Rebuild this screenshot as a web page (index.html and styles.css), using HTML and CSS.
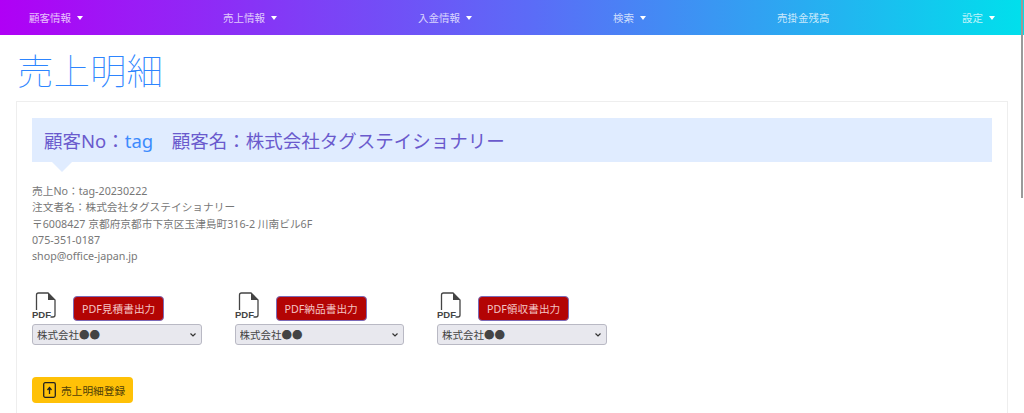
FILE: index.html
```html
<!DOCTYPE html>
<html lang="ja">
<head>
  <meta charset="UTF-8" />
  <meta name="viewport" content="width=device-width, initial-scale=1" />
  <title>売上明細</title>
  <link rel="stylesheet" href="styles.css">
</head>
<body>

<nav class="navbar">
  <a class="nav-item caret" href="#">顧客情報</a>
  <a class="nav-item caret" href="#">売上情報</a>
  <a class="nav-item caret" href="#">入金情報</a>
  <a class="nav-item caret" href="#">検索</a>
  <a class="nav-item" href="#">売掛金残高</a>
  <a class="nav-item caret" href="#">設定</a>
</nav>

<main class="page">
  <h1 class="page-title">売上明細</h1>

  <section class="card">
    <div class="balloon">
      <h2>顧客No：<a href="#">tag</a>　顧客名：株式会社タグステイショナリー</h2>
    </div>

    <p class="address">
      売上No：tag-20230222<br>
      注文者名：株式会社タグステイショナリー<br>
      〒6008427 京都府京都市下京区玉津島町316-2 川南ビル6F<br>
      075-351-0187<br>
      shop@office-japan.jp
    </p>

    <div class="pdf-row">
      <div class="pdf-col">
        <div class="pdf-head">
          <svg class="pdf-icon" width="25" height="27" viewBox="0 0 25 27" aria-hidden="true">
            <path d="M4.500 18V3a2 2 0 0 1 2-2H16l7 7v15a2 2 0 0 1-2 2h-2.500" fill="none" stroke="#444" stroke-width="1.300"/>
            <path d="M16 1l7 7h-7z" fill="#444"/>
            <text x="0" y="26" class="pdf-label">PDF</text>
          </svg>
          <button class="btn-pdf">PDF見積書出力</button>
        </div>
        <select class="company"><option>株式会社●●</option></select>
      </div>
      <div class="pdf-col">
        <div class="pdf-head">
          <svg class="pdf-icon" width="25" height="27" viewBox="0 0 25 27" aria-hidden="true">
            <path d="M4.500 18V3a2 2 0 0 1 2-2H16l7 7v15a2 2 0 0 1-2 2h-2.500" fill="none" stroke="#444" stroke-width="1.300"/>
            <path d="M16 1l7 7h-7z" fill="#444"/>
            <text x="0" y="26" class="pdf-label">PDF</text>
          </svg>
          <button class="btn-pdf">PDF納品書出力</button>
        </div>
        <select class="company"><option>株式会社●●</option></select>
      </div>
      <div class="pdf-col">
        <div class="pdf-head">
          <svg class="pdf-icon" width="25" height="27" viewBox="0 0 25 27" aria-hidden="true">
            <path d="M4.500 18V3a2 2 0 0 1 2-2H16l7 7v15a2 2 0 0 1-2 2h-2.500" fill="none" stroke="#444" stroke-width="1.300"/>
            <path d="M16 1l7 7h-7z" fill="#444"/>
            <text x="0" y="26" class="pdf-label">PDF</text>
          </svg>
          <button class="btn-pdf">PDF領収書出力</button>
        </div>
        <select class="company"><option>株式会社●●</option></select>
      </div>
    </div>

    <button class="btn-register">
      <svg width="13" height="16" viewBox="0 0 13 16" aria-hidden="true">
        <rect x="0.700" y="0.700" width="11.600" height="14.600" rx="1.500" fill="none" stroke="#222" stroke-width="1.300"/>
        <path d="M6.500 12V6.500M4.500 8L6.500 5.500 8.500 8" fill="none" stroke="#222" stroke-width="1.300"/>
      </svg>
      売上明細登録
    </button>
  </section>
</main>

<div class="scroll-thumb"></div>

</body>
</html>
```
FILE: styles.css
```css
* {
  box-sizing: border-box;
}
html, body {
  height: 100%;
  overflow: hidden;
}
body {
  margin: 0;
  font-family: "Noto Sans", "Noto Sans CJK JP", sans-serif;
  font-size: 10.700px;
  color: #777;
  background: #fff;
}
a {
  text-decoration: none;
}

/* Navbar */
.navbar {
  height: 35px;
  padding-left: 29px;
  display: grid;
  grid-template-columns: 194px 195px 195px 164px 185px 1fr;
  align-items: center;
  background: linear-gradient(90deg, #b000f5 0%, #5b6cf7 52%, #00e0ec 100%);
}
.nav-item {
  color: rgba(255, 255, 255, 0.75);
  font-size: 10.500px;
}
.caret::after {
  content: "";
  display: inline-block;
  margin-left: 6px;
  vertical-align: 2px;
  border-top: 4px solid #fff;
  border-left: 3.500px solid transparent;
  border-right: 3.500px solid transparent;
}

/* Page */
.page {
  padding: 0 16px;
}
.page-title {
  margin: 15px 0 8px 1px;
  font-size: 36.500px;
  line-height: 43px;
  font-weight: 100;
  color: #2d85ff;
}
.card {
  border: 1px solid #eee;
  padding: 16px 15px;
}
.balloon {
  position: relative;
  height: 44px;
  padding: 0 12px;
  background: #e0ecff;
  display: flex;
  align-items: center;
}
.balloon::after {
  content: "";
  position: absolute;
  left: 20px;
  bottom: -10px;
  border-top: 10px solid #e0ecff;
  border-left: 10px solid transparent;
  border-right: 10px solid transparent;
}
.balloon h2 {
  margin: 0;
  font-size: 18.500px;
  font-weight: 400;
  color: #6a5acd;
}
.balloon a {
  color: #3d8bfd;
}
.address {
  margin: 21px 0 0;
  line-height: 16.300px;
}

/* PDF buttons */
.pdf-row {
  display: flex;
  gap: 33px;
  margin-top: 28px;
}
.pdf-col {
  width: 169.500px;
}
.pdf-head {
  display: flex;
  align-items: flex-end;
  gap: 16px;
  height: 29px;
  margin-bottom: 3px;
}
.pdf-icon {
  flex: none;
  align-self: flex-start;
}
.pdf-label {
  font-family: "Liberation Sans", sans-serif;
  font-size: 9.500px;
  font-weight: bold;
  fill: #444;
}
.btn-pdf {
  height: 25px;
  padding: 0 8px;
  font-family: inherit;
  font-size: 10.700px;
  color: #f3c4c4;
  background: #b30404;
  border: 1px solid #7a6ab8;
  border-radius: 4px;
}
.company {
  display: block;
  width: 100%;
  height: 21px;
  padding: 0 4px;
  appearance: none;
  font-family: "Noto Sans CJK JP", sans-serif;
  font-size: 10.500px;
  color: #444;
  background: #e8e8ee url("data:image/svg+xml,%3Csvg xmlns='http://www.w3.org/2000/svg' width='6' height='4'%3E%3Cpath d='M.5.5l2.500 2.500L5.500.5' fill='none' stroke='%23333' stroke-width='1.200'/%3E%3C/svg%3E") no-repeat right 5px center;
  border: 1px solid #b9b9c4;
  border-radius: 3px;
}
.btn-register {
  display: flex;
  align-items: center;
  gap: 5px;
  height: 26px;
  margin-top: 32px;
  padding: 0 8px 0 11px;
  font-family: inherit;
  font-size: 10.700px;
  color: #4f4008;
  background: #ffc107;
  border: none;
  border-radius: 4px;
}

/* Scrollbar thumb from the window */
.scroll-thumb {
  position: absolute;
  top: 0;
  right: 1px;
  width: 2px;
  height: 198px;
  background: #9a9a9a;
}
```
